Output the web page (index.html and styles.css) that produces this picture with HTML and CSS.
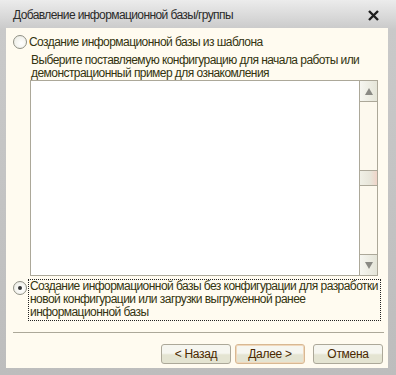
FILE: index.html
```html
<!DOCTYPE html>
<html lang="ru">
<head>
  <meta charset="UTF-8" />
  <title>Добавление информационной базы/группы</title>
  <link rel="stylesheet" href="styles.css">
</head>
<body>
  <div class="window">
    <div class="titlebar">
      <span class="title">Добавление информационной базы/группы</span>
      <svg class="close" width="11" height="11" viewBox="0 0 11 11">
        <path d="M1 1 L10 10 M10 1 L1 10" stroke="#1e1e1e" stroke-width="2.4" fill="none"/>
      </svg>
    </div>

    <div class="panel">
      <label class="option">
        <span class="radio"></span>
        <span class="option-text">Создание информационной базы из шаблона</span>
      </label>

      <div class="hint">
        Выберите поставляемую конфигурацию для начала работы или<br/>
        демонстрационный пример для ознакомления
      </div>

      <div class="list">
        <div class="list-body"></div>
        <div class="scrollbar">
          <div class="sb-btn"><span class="arrow up"></span></div>
          <div class="sb-track">
            <div class="sb-thumb"></div>
          </div>
          <div class="sb-btn"><span class="arrow down"></span></div>
        </div>
      </div>

      <label class="option checked">
        <span class="radio"></span>
        <span class="option-text focus">Создание информационной базы без конфигурации для разработки<br/>
          новой конфигурации или загрузки выгруженной ранее<br/>
          информационной базы</span>
      </label>

      <div class="separator"></div>

      <div class="buttons">
        <button class="btn">&lt; Назад</button>
        <button class="btn default">Далее &gt;</button>
        <button class="btn cancel">Отмена</button>
      </div>
    </div>
  </div>
</body>
</html>
```

FILE: styles.css
```css
html, body {
  margin: 0;
  padding: 0;
  background: #c4c4c4;
}

.window {
  width: 396px;
  height: 375px;
  box-sizing: border-box;
  padding: 0 8px 7px 6px;
  background: linear-gradient(#ececec, #c9c9c9 30px, #bdbdbd);
  font-family: "Liberation Sans", Arial, sans-serif;
  font-size: 12px;
  letter-spacing: -0.55px;
  display: flex;
  flex-direction: column;
  overflow: hidden;
}

.titlebar {
  height: 28px;
  flex: none;
  display: flex;
  align-items: center;
  justify-content: space-between;
  padding: 2px 9px 0 7px;
  box-sizing: border-box;
}

.title {
  color: #2a2a2a;
  letter-spacing: -0.6px;
}

.close {
  display: block;
}

.panel {
  flex: 1;
  min-height: 0;
  background: #fffbf0;
  padding: 7px 5px 0 7px;
  color: #33330f;
  line-height: 13px;
  white-space: nowrap;
}

.option {
  display: flex;
  align-items: flex-start;
  gap: 2px;
}

.radio {
  width: 12px;
  height: 12px;
  border: 1px solid #8f8f84;
  border-radius: 50%;
  background: radial-gradient(circle at 60% 60%, #ffffff, #e9e9e0);
  flex: none;
  display: flex;
  align-items: center;
  justify-content: center;
}

.option.checked .radio::after {
  content: "";
  width: 4px;
  height: 4px;
  border-radius: 50%;
  background: #333;
}

.option-text {
  padding-top: 1px;
}

.option-text.focus {
  outline: 1px dotted #222;
  padding: 0 1px 1px 1px;
  margin-top: -1px;
  width: 349px;
}

.hint {
  margin: 5px 0 0 18px;
}

.list {
  margin: 0 0 5px 17px;
  width: 348px;
  height: 196px;
  border: 1px solid #aca899;
  box-sizing: border-box;
  background: #fff;
  display: flex;
}

.list-body {
  flex: 1;
}

.scrollbar {
  width: 17px;
  border-left: 1px solid #aca899;
  display: flex;
  flex-direction: column;
  background: #fdf9ee;
}

.sb-btn {
  height: 20px;
  background: linear-gradient(90deg, #f6f6f0, #e5e5d8);
  display: flex;
  align-items: center;
  justify-content: center;
}

.sb-btn:first-child {
  border-bottom: 1px solid #aca899;
}

.sb-btn:last-child {
  border-top: 1px solid #aca899;
}

.arrow {
  width: 0;
  height: 0;
  border-left: 4px solid transparent;
  border-right: 4px solid transparent;
}

.arrow.up {
  border-bottom: 7px solid #8a8a84;
}

.arrow.down {
  border-top: 7px solid #8a8a84;
}

.sb-track {
  flex: 1;
  padding-top: 68px;
}

.sb-thumb {
  height: 14px;
  border-top: 1px solid #aca899;
  border-bottom: 1px solid #aca899;
  background: linear-gradient(90deg, #f0f0e6, #e8e6da 60%, #f0d4c8);
}

.separator {
  height: 1px;
  background: #aca899;
  margin: 12px 0 11px 0;
  width: 371px;
}

.buttons {
  display: flex;
  justify-content: flex-end;
  gap: 4px;
}

.btn {
  width: 70px;
  height: 20px;
  font-family: inherit;
  font-size: 12px;
  letter-spacing: -0.3px;
  color: #4a2800;
  border: 1px solid #aca899;
  border-radius: 3px;
  background: linear-gradient(#f6f6f0 0, #f6f6f0 45%, #e4e4d2 55%, #e4e4d2 100%);
  padding: 0;
  line-height: 16px;
}

.btn.default {
  border-color: #d8b892;
  box-shadow: inset 0 0 0 1px #f0d8bc;
}

.btn.cancel {
  margin-left: 4px;
}
```
